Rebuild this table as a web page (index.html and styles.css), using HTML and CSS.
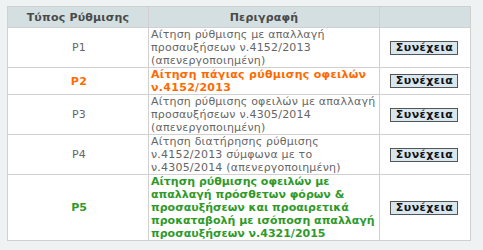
FILE: index.html
```html
<!DOCTYPE html>
<html lang="el">
<head>
<meta charset="utf-8">
<link rel="stylesheet" href="styles.css">
</head>
<body>
<table class="grid">
  <colgroup>
    <col class="c-type">
    <col class="c-desc">
    <col class="c-act">
  </colgroup>
  <thead>
    <tr><th>Τύπος Ρύθμισης</th><th>Περιγραφή</th><th></th></tr>
  </thead>
  <tbody>
    <tr>
      <td class="type">Ρ1</td>
      <td class="desc">Αίτηση ρύθμισης με απαλλαγή προσαυξήσεων ν.4152/2013 (απενεργοποιημένη)</td>
      <td class="act"><button class="btn">Συνέχεια</button></td>
    </tr>
    <tr class="hl-orange">
      <td class="type">Ρ2</td>
      <td class="desc">Αίτηση πάγιας ρύθμισης οφειλών ν.4152/2013</td>
      <td class="act"><button class="btn">Συνέχεια</button></td>
    </tr>
    <tr>
      <td class="type">Ρ3</td>
      <td class="desc">Αίτηση ρύθμισης οφειλών με απαλλαγή προσαυξήσεων ν.4305/2014 (απενεργοποιημένη)</td>
      <td class="act"><button class="btn">Συνέχεια</button></td>
    </tr>
    <tr>
      <td class="type">Ρ4</td>
      <td class="desc">Αίτηση διατήρησης ρύθμισης ν.4152/2013 σύμφωνα με το ν.4305/2014 (απενεργοποιημένη)</td>
      <td class="act"><button class="btn">Συνέχεια</button></td>
    </tr>
    <tr class="hl-green">
      <td class="type">Ρ5</td>
      <td class="desc">Αίτηση ρύθμισης οφειλών με απαλλαγή πρόσθετων φόρων &amp; προσαυξήσεων και προαιρετικά προκαταβολή με ισόποση απαλλαγή προσαυξήσεων ν.4321/2015</td>
      <td class="act"><button class="btn">Συνέχεια</button></td>
    </tr>
  </tbody>
</table>
</body>
</html>
```
FILE: styles.css
```css
html, body {
  margin: 0;
  padding: 0;
  background: #eef2f3;
}
body {
  padding: 6px 0 0 7px;
  font-family: "DejaVu Sans", Verdana, sans-serif;
  font-size: 11px;
  color: #666;
}
.grid {
  border-collapse: collapse;
  width: 463px;
  table-layout: fixed;
  background: #fff;
  border: 1px solid #d0d0d0;
}
.c-type { width: 141px; }
.c-desc { width: 231px; }
.c-act { width: 91px; }
.grid th {
  background: #d3dfe0;
  color: #4a4a4a;
  font-weight: bold;
  height: 20px;
  padding: 0;
  text-align: center;
  line-height: 13px;
  letter-spacing: 0.2px;
  border-left: 1px solid #d0d0d0;
}
.grid td {
  border: 1px solid #d0d0d0;
  padding: 0 0 0 2px;
  line-height: 13px;
  letter-spacing: 0.2px;
  vertical-align: middle;
}
.grid td.type { text-align: center; }
.grid td.act { text-align: center; padding: 0; }
.hl-orange td { color: #ff6a00; font-weight: bold; letter-spacing: 0.3px; }
.hl-green td { color: #2f9a2a; font-weight: bold; letter-spacing: 0; }
.btn {
  font-family: "DejaVu Sans", Verdana, sans-serif;
  font-size: 11px;
  font-weight: bold;
  letter-spacing: 0.5px;
  color: #111;
  background: #d8e6ee;
  border: 1px solid #555;
  padding: 0 4px 0 5px;
  height: 14px;
  line-height: 12px;
  margin: 0;
  margin-left: -2px;
  border-radius: 0;
}
```
